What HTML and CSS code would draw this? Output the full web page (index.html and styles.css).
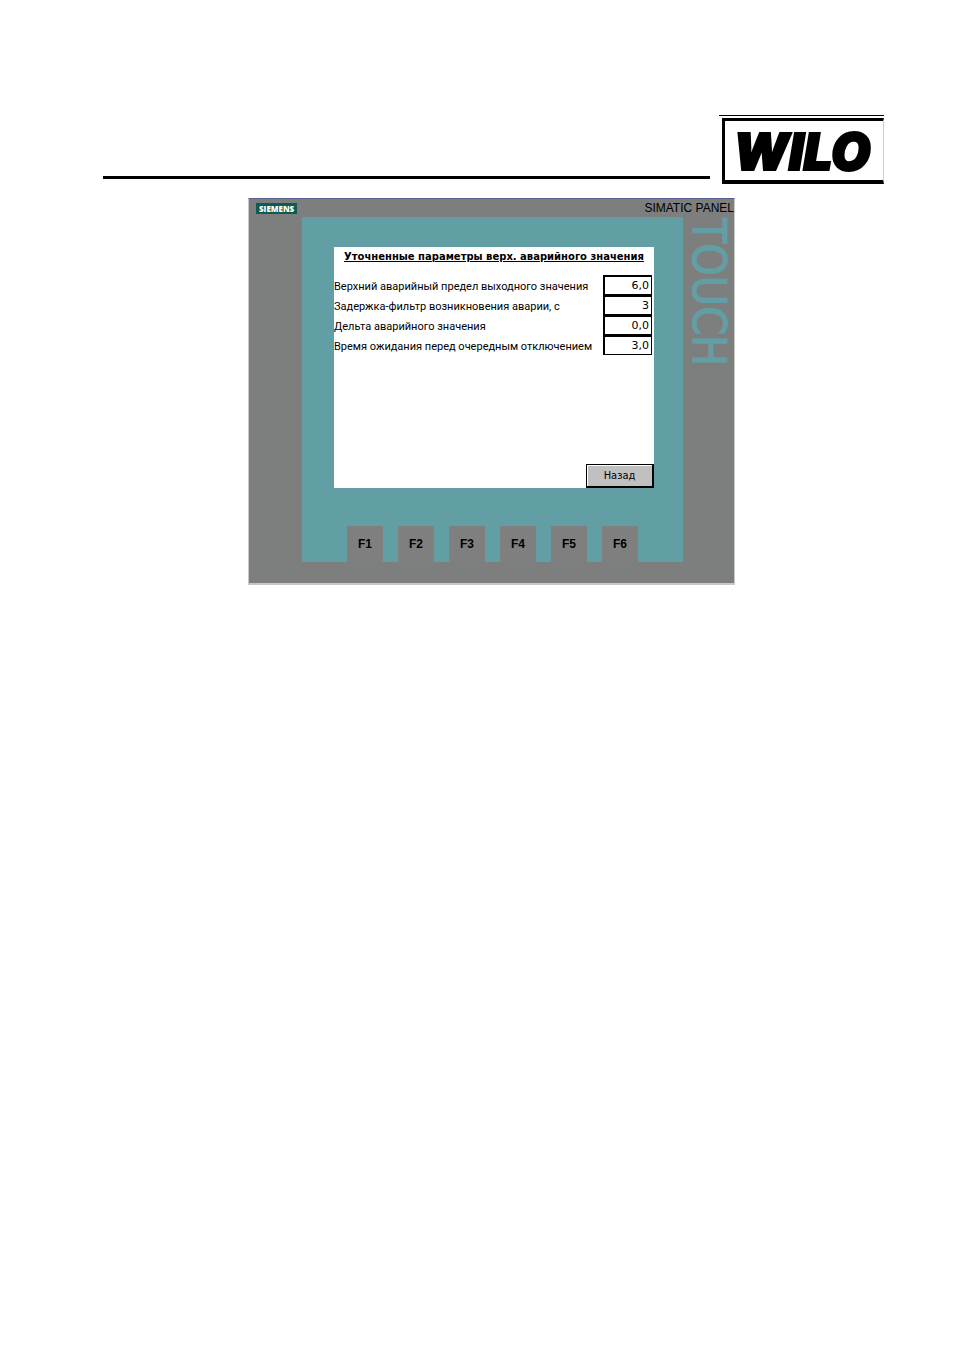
FILE: index.html
```html
<!DOCTYPE html>
<html lang="ru">
<head>
<meta charset="UTF-8" />
<meta name="viewport" content="width=device-width, initial-scale=1" />
<title>SIMATIC PANEL</title>
<link rel="stylesheet" href="styles.css">
</head>
<body>
    <header class="page-header">
        <div class="rule"></div>
        <div class="logo">
            <div class="logo-box">WILO</div>
        </div>
    </header>

    <main>
        <div class="panel">
            <div class="panel-top">
                <span class="brand">SIEMENS</span>
                <span class="model">SIMATIC PANEL</span>
            </div>

            <div class="bezel">
                <form class="screen">
                    <h1>Уточненные параметры верх. аварийного значения</h1>

                    <div class="row">
                        <label for="limit">Верхний аварийный предел выходного значения</label>
                        <input type="text" id="limit" value="6,0" />
                    </div>
                    <div class="row">
                        <label for="delay">Задержка-фильтр возникновения аварии, с</label>
                        <input type="text" id="delay" value="3" />
                    </div>
                    <div class="row">
                        <label for="delta">Дельта аварийного значения</label>
                        <input type="text" id="delta" value="0,0" />
                    </div>
                    <div class="row">
                        <label for="wait">Время ожидания перед очередным отключением</label>
                        <input type="text" id="wait" value="3,0" />
                    </div>

                    <button type="button" class="back">Назад</button>
                </form>

                <div class="keys">
                    <button type="button" class="key">F1</button>
                    <button type="button" class="key">F2</button>
                    <button type="button" class="key">F3</button>
                    <button type="button" class="key">F4</button>
                    <button type="button" class="key">F5</button>
                    <button type="button" class="key">F6</button>
                </div>
            </div>

            <div class="touch">TOUCH</div>
        </div>
    </main>
</body>
</html>
```
FILE: styles.css
```css
* {
    margin: 0;
    padding: 0;
    box-sizing: border-box;
}

body {
    font-family: "Liberation Sans", Arial, sans-serif;
    background: #fff;
    color: #000;
    padding: 115px 70px 40px 103px;
}

/* Page header */
.page-header {
    display: flex;
    align-items: flex-start;
    gap: 9px;
}

.rule {
    flex: 1;
    height: 64px;
    border-bottom: 3px solid #000;
}

.logo {
    width: 165px;
    border-top: 1px solid #000;
    padding: 2px 0 0 3px;
}

.logo-box {
    height: 66px;
    padding-right: 4px;
    border: 3px solid #000;
    border-right: 1px solid #ccc;
    border-bottom-width: 4px;
    font-family: Inter, "Liberation Sans", sans-serif;
    font-size: 51px;
    font-weight: 900;
    font-style: italic;
    line-height: 62px;
    text-align: center;
    -webkit-text-stroke: 2px #000;
}

/* Operator panel */
main {
    padding: 14px 4px 0 0;
}

.panel {
    display: grid;
    grid-template-columns: 53px minmax(0, 1fr) 51px;
    grid-template-rows: 18px auto;
    width: 100%;
    max-width: 487px;
    margin: 0 auto;
    padding-bottom: 21px;
    background: #7d7f7f;
    border: 1px solid #c8c8c4;
    border-top-color: #5a6090;
    border-bottom-width: 2px;
}

.panel-top {
    grid-column: 1 / -1;
    display: flex;
    justify-content: space-between;
    align-items: center;
    padding-left: 7px;
}

.brand {
    height: 11px;
    padding: 0 3px;
    background: #0c5c50;
    color: #fff;
    font-family: "Open Sans", sans-serif;
    font-size: 8px;
    font-weight: 800;
    line-height: 11px;
}

.model {
    font-size: 12px;
    line-height: 18px;
}

.bezel {
    grid-column: 2;
    background: #629fa5;
    padding: 30px 29px 0 32px;
}

/* Screen */
.screen {
    display: flex;
    flex-direction: column;
    height: 241px;
    background: #fff;
    font-family: "DejaVu Sans", sans-serif;
    font-size: 11px;
}

.screen h1 {
    margin-bottom: 8px;
    font-size: 10px;
    line-height: 20px;
    text-align: center;
    text-decoration: underline;
    white-space: nowrap;
}

.row {
    display: flex;
    justify-content: space-between;
    align-items: center;
    height: 20px;
    padding-right: 2px;
    white-space: nowrap;
}

.row label {
    padding-top: 3px;
    font-family: Roboto, sans-serif;
    line-height: 20px;
}

.row input {
    width: 49px;
    height: 20px;
    padding-right: 2px;
    background: #fff;
    border: 1px solid #000;
    border-width: 2px 1px 1px 2px;
    font: inherit;
    text-align: right;
}

.back {
    width: 68px;
    height: 24px;
    margin: auto 0 0 auto;
    background: #c0c0c0;
    border: 1px solid #000;
    border-width: 1px 2px 2px 1px;
    box-shadow: inset 1px 1px #fff;
    color: #000;
    font-family: "DejaVu Sans Condensed", "DejaVu Sans", sans-serif;
    font-size: 11px;
}

/* Function keys */
.keys {
    display: flex;
    justify-content: center;
    gap: 15px;
    margin-top: 38px;
    padding-right: 3px;
}

.key {
    width: 36px;
    height: 36px;
    background: #7f7f7f;
    border: none;
    color: #000;
    font-family: "Liberation Sans", Arial, sans-serif;
    font-size: 12px;
    font-weight: 700;
}

.touch {
    grid-column: 3;
    justify-self: center;
    padding-top: 1px;
    writing-mode: vertical-rl;
    color: #629fa5;
    font-family: "DejaVu Sans Condensed", "DejaVu Sans", sans-serif;
    font-size: 46px;
    line-height: 50px;
    -webkit-text-stroke: 1px #629fa5;
}
```
